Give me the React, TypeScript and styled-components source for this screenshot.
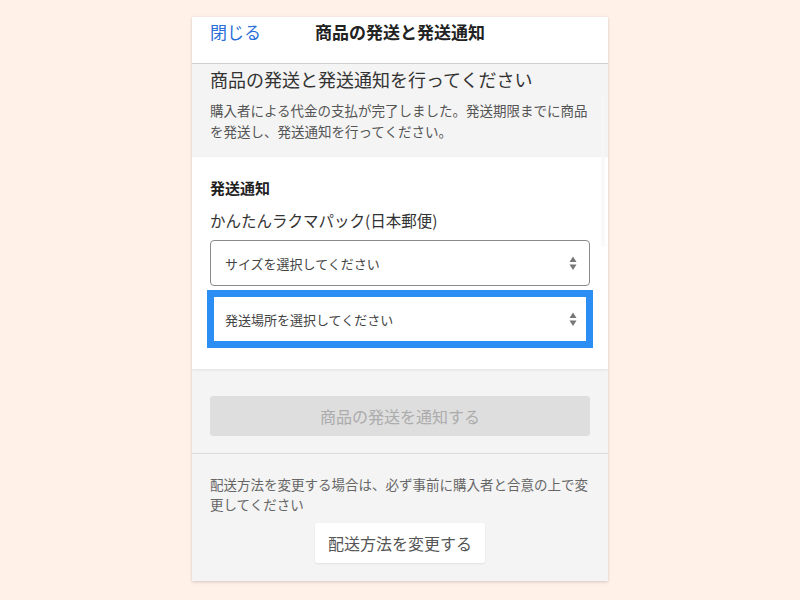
import styled, { createGlobalStyle } from 'styled-components';

const GlobalStyle = createGlobalStyle`
  html, body {
    margin: 0;
    padding: 0;
    background: #fff1e8;
  }
  body {
    font-family: "Noto Sans CJK JP", "Noto Sans", sans-serif;
    color: #333;
  }
  * {
    box-sizing: border-box;
  }
`;

/* ── Layout ── */
const Stage = styled.div`
  width: 800px;
  height: 600px;
  padding-top: 17px;
  display: flex;
  justify-content: center;
  align-items: flex-start;
`;

const Card = styled.div`
  position: relative;
  width: 416px;
  background: #f4f4f4;
  box-shadow: 0 1px 3px rgba(0, 0, 0, 0.18);
  overflow: hidden;
`;

const ScrollThumb = styled.div`
  position: absolute;
  right: 3px;
  top: 78px;
  width: 4px;
  height: 152px;
  border-radius: 2px;
  background: rgba(246, 246, 246, 0.7);
`;

/* ── Header ── */
const Header = styled.div`
  height: 47px;
  background: #fff;
  border-bottom: 1px solid #cfcfcf;
  display: grid;
  grid-template-columns: 1fr auto 1fr;
  align-items: start;
  padding: 4px 18px 0 18px;
`;

const CloseLink = styled.a`
  font-size: 17px;
  line-height: 22px;
  color: #2a6ed9;
  text-decoration: none;
  cursor: pointer;
`;

const HeaderTitle = styled.h1`
  margin: 0;
  font-size: 17px;
  line-height: 22px;
  font-weight: 700;
  color: #222;
`;

/* ── Intro ── */
const Intro = styled.section`
  padding: 3px 18px 16px 18px;
`;

const IntroTitle = styled.h2`
  margin: 0;
  font-size: 18px;
  line-height: 24px;
  font-weight: 400;
  color: #333;
`;

const IntroText = styled.p`
  margin: 9px 0 0 0;
  font-size: 13.5px;
  line-height: 20.5px;
  color: #555;
`;

/* ── Form ── */
const FormSection = styled.section`
  background: #fff;
  padding: 20px 18px 24px 18px;
  box-shadow: 0 1px 3px rgba(0, 0, 0, 0.08);
  position: relative;
`;

const SectionLabel = styled.h3`
  margin: 0;
  font-size: 15px;
  line-height: 22px;
  font-weight: 700;
  color: #222;
`;

const MethodName = styled.div`
  margin-top: 9px;
  font-size: 15.5px;
  line-height: 24px;
  color: #333;
`;

const SelectBox = styled.div<{ $focused?: boolean }>`
  display: flex;
  align-items: center;
  justify-content: space-between;
  height: ${p => (p.$focused ? 52 : 46)}px;
  margin-top: ${p => (p.$focused ? 7 : 8)}px;
  padding: 0 ${p => (p.$focused ? 9 : 12)}px 0 ${p => (p.$focused ? 11 : 14)}px;
  border: ${p => (p.$focused ? '4px solid #2b8ef4' : '1px solid #8a8a8a')};
  outline: ${p => (p.$focused ? '3px solid #2b8ef4' : 'none')};
  border-radius: ${p => (p.$focused ? 0 : 4)}px;
  background: #fff;
`;

const SelectText = styled.span`
  font-size: 13px;
  color: #444;
`;

const Arrows = styled.svg`
  width: 8px;
  height: 20px;
  fill: #777;
`;

/* ── Actions ── */
const ActionArea = styled.section`
  padding: 27px 18px 17px 18px;
  border-bottom: 1px solid #dcdcdc;
`;

const DisabledButton = styled.button`
  width: 100%;
  height: 40px;
  border: none;
  border-radius: 3px;
  background: #dedede;
  color: #acacac;
  font-family: inherit;
  font-size: 16px;
`;

const ChangeArea = styled.section`
  padding: 20px 18px 18px 18px;
  display: flex;
  flex-direction: column;
  align-items: center;
`;

const Note = styled.p`
  align-self: stretch;
  margin: 0;
  font-size: 13.5px;
  line-height: 20px;
  color: #666;
`;

const SecondaryButton = styled.button`
  margin-top: 9px;
  width: 170px;
  height: 40px;
  border: none;
  border-radius: 3px;
  background: #fff;
  box-shadow: 0 1px 2px rgba(0, 0, 0, 0.08);
  color: #555;
  font-family: inherit;
  font-size: 16px;
`;

function UpDown() {
  return (
    <Arrows viewBox="0 0 8 20">
      <path d="M4 3.5 L7.5 9 L0.5 9 Z" />
      <path d="M0.5 11.5 L7.5 11.5 L4 17 Z" />
    </Arrows>
  );
}

export default function App() {
  return (
    <>
      <GlobalStyle />
      <Stage>
        <Card>
          <Header>
            <CloseLink>閉じる</CloseLink>
            <HeaderTitle>商品の発送と発送通知</HeaderTitle>
            <span />
          </Header>

          <Intro>
            <IntroTitle>商品の発送と発送通知を行ってください</IntroTitle>
            <IntroText>
              購入者による代金の支払が完了しました。発送期限までに商品を発送し、発送通知を行ってください。
            </IntroText>
          </Intro>

          <FormSection>
            <SectionLabel>発送通知</SectionLabel>
            <MethodName>かんたんラクマパック(日本郵便)</MethodName>
            <SelectBox>
              <SelectText>サイズを選択してください</SelectText>
              <UpDown />
            </SelectBox>
            <SelectBox $focused>
              <SelectText>発送場所を選択してください</SelectText>
              <UpDown />
            </SelectBox>
          </FormSection>

          <ActionArea>
            <DisabledButton disabled>商品の発送を通知する</DisabledButton>
          </ActionArea>

          <ChangeArea>
            <Note>配送方法を変更する場合は、必ず事前に購入者と合意の上で変更してください</Note>
            <SecondaryButton>配送方法を変更する</SecondaryButton>
          </ChangeArea>

          <ScrollThumb />
        </Card>
      </Stage>
    </>
  );
}
